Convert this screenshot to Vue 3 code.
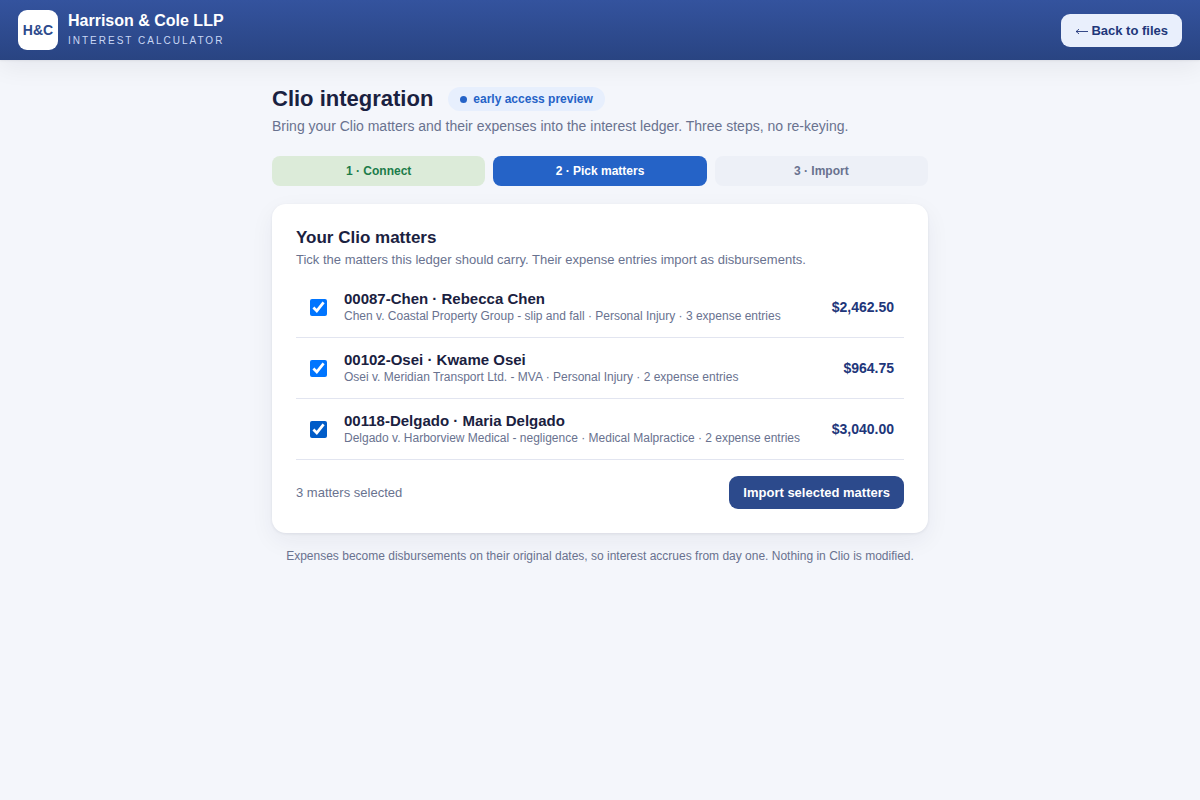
<script setup>
import { computed, ref } from 'vue'

const steps = [
  { label: '1 · Connect', state: 'done' },
  { label: '2 · Pick matters', state: 'current' },
  { label: '3 · Import', state: 'next' },
]

const matters = ref([
  {
    id: '00087',
    title: '00087-Chen · Rebecca Chen',
    detail: 'Chen v. Coastal Property Group - slip and fall · Personal Injury · 3 expense entries',
    amount: '$2,462.50',
    picked: true,
    active: false,
  },
  {
    id: '00102',
    title: '00102-Osei · Kwame Osei',
    detail: 'Osei v. Meridian Transport Ltd. - MVA · Personal Injury · 2 expense entries',
    amount: '$964.75',
    picked: true,
    active: false,
  },
  {
    id: '00118',
    title: '00118-Delgado · Maria Delgado',
    detail: 'Delgado v. Harborview Medical - negligence · Medical Malpractice · 2 expense entries',
    amount: '$3,040.00',
    picked: true,
    active: true,
  },
])

const pickedCount = computed(() => matters.value.filter((m) => m.picked).length)
</script>

<template>
  <div class="page">
    <header class="topbar">
      <div class="brand">
        <div class="logo">H&amp;C</div>
        <div>
          <div class="firm">Harrison &amp; Cole LLP</div>
          <div class="product">INTEREST CALCULATOR</div>
        </div>
      </div>
      <button type="button" class="btn btn-light">
        <svg viewBox="0 0 13 11" width="13" height="11" aria-hidden="true">
          <path d="M1 6.5H13" fill="none" stroke="currentColor" stroke-width="0.9" />
          <path d="M3.8 4C3.2 5.2 2.2 6.1 1 6.5C2.2 6.9 3.2 7.8 3.8 9" fill="none" stroke="currentColor" stroke-width="0.9" />
        </svg>
        Back to files
      </button>
    </header>

    <main class="content">
      <div class="heading">
        <h1>Clio integration</h1>
        <span class="badge"><span class="dot"></span>early access preview</span>
      </div>
      <p class="lead">Bring your Clio matters and their expenses into the interest ledger. Three steps, no re-keying.</p>

      <ol class="steps">
        <li v-for="step in steps" :key="step.label" class="step" :class="step.state">{{ step.label }}</li>
      </ol>

      <section class="card">
        <h2>Your Clio matters</h2>
        <p class="hint">Tick the matters this ledger should carry. Their expense entries import as disbursements.</p>

        <label v-for="m in matters" :key="m.id" class="matter" :for="'matter-' + m.id">
          <input :id="'matter-' + m.id" v-model="m.picked" type="checkbox" class="tick" :class="{ active: m.active }" />
          <span class="info">
            <span class="title">{{ m.title }}</span>
            <span class="detail">{{ m.detail }}</span>
          </span>
          <span class="amount">{{ m.amount }}</span>
        </label>

        <div class="actions">
          <span class="count">{{ pickedCount }} matters selected</span>
          <button type="button" class="btn btn-dark">Import selected matters</button>
        </div>
      </section>

      <p class="footnote">Expenses become disbursements on their original dates, so interest accrues from day one. Nothing in Clio is modified.</p>
    </main>
  </div>
</template>

<style>
html,
body {
  margin: 0;
  background: #f4f6fb;
}
</style>

<style scoped>
.page {
  min-height: 100vh;
  background: #f4f6fb;
  color: #1a2140;
  font-family: "Liberation Sans", Arial, sans-serif;
  font-size: 14px;
}

.page * {
  box-sizing: border-box;
}

.topbar {
  display: flex;
  align-items: center;
  justify-content: space-between;
  padding: 10px 18px;
  background: linear-gradient(180deg, #34539e, #294482);
  box-shadow: 0 1px 2px rgba(16, 24, 40, 0.06), 0 8px 24px rgba(16, 24, 40, 0.06);
}

.brand {
  display: flex;
  align-items: center;
  gap: 10px;
}

.logo {
  display: grid;
  place-items: center;
  width: 40px;
  height: 40px;
  border-radius: 9px;
  background: #fff;
  color: #2c4a8c;
  font-size: 14px;
  font-weight: 700;
}

.firm {
  color: #fff;
  font-size: 16px;
  font-weight: 700;
  line-height: 22px;
}

.product {
  color: #c9d7f5;
  font-size: 10px;
  letter-spacing: 2px;
  line-height: 18px;
}

.btn {
  display: inline-flex;
  align-items: center;
  gap: 3px;
  height: 33px;
  padding: 0 14px;
  border: 0;
  border-radius: 9px;
  font-family: inherit;
  font-size: 13px;
  font-weight: 700;
}

.btn-light {
  background: #e9effc;
  color: #21367a;
}

.btn-dark {
  background: #2c4a8c;
  color: #fff;
}

.content {
  max-width: 656px;
  margin: 0 auto;
  padding: 26px 0;
}

.heading {
  display: flex;
  align-items: center;
  gap: 15px;
}

h1 {
  margin: 0;
  font-size: 22px;
  line-height: 26px;
}

.badge {
  display: inline-flex;
  align-items: center;
  gap: 6px;
  height: 24px;
  padding: 0 12px;
  border-radius: 12px;
  background: #e7effd;
  color: #2563c7;
  font-size: 12px;
  font-weight: 700;
}

.dot {
  width: 7px;
  height: 7px;
  border-radius: 50%;
  background: #2563c7;
}

.lead {
  margin: 6px 0 0;
  color: #69728f;
  font-size: 14px;
  line-height: 16px;
}

.steps {
  display: grid;
  grid-template-columns: repeat(3, 1fr);
  gap: 8px;
  margin: 22px 0 18px;
  padding: 0;
  list-style: none;
}

.step {
  border-radius: 8px;
  font-size: 12px;
  font-weight: 700;
  line-height: 30px;
  text-align: center;
}

.done {
  background: #dcebd9;
  color: #1c7c4a;
}

.current {
  background: #2563c7;
  color: #fff;
}

.next {
  background: #edf0f7;
  color: #69728f;
}

.card {
  padding: 24px;
  border-radius: 14px;
  background: #fff;
  box-shadow: 0 1px 3px rgba(26, 33, 64, 0.08), 0 8px 24px rgba(26, 33, 64, 0.06);
}

h2 {
  margin: 0;
  font-size: 17px;
  line-height: 20px;
}

.hint {
  margin: 4px 0 9px;
  color: #69728f;
  font-size: 13px;
  line-height: 16px;
}

.matter {
  display: flex;
  align-items: center;
  gap: 12px;
  height: 61px;
  padding: 0 10px;
  border-bottom: 1px solid #e2e5f0;
}

.tick {
  flex: none;
  width: 17px;
  height: 17px;
  margin: 0 5px 0 4px;
  accent-color: #0075ff;
}

.tick.active {
  accent-color: #005cc8;
}

.info {
  flex: 1;
  min-width: 0;
}

.title,
.detail {
  display: block;
}

.title {
  font-size: 15px;
  font-weight: 700;
  line-height: 17px;
}

.detail {
  color: #69728f;
  font-size: 12px;
  line-height: 18px;
}

.amount {
  color: #21367a;
  font-size: 14px;
  font-weight: 700;
}

.actions {
  display: flex;
  align-items: center;
  justify-content: space-between;
  margin-top: 16px;
}

.count {
  color: #69728f;
  font-size: 13px;
}

.footnote {
  margin: 15px 0 0;
  color: #69728f;
  font-size: 12px;
  line-height: 16px;
  text-align: center;
}
</style>
